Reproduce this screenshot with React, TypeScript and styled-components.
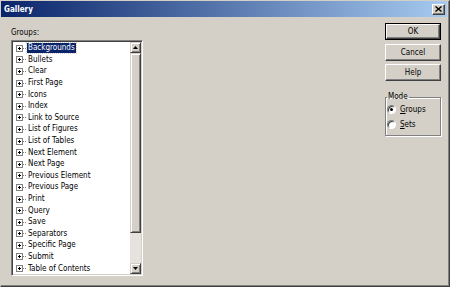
import React from "react";
import styled, { createGlobalStyle } from "styled-components";

const FONT = `"DejaVu Sans Condensed", "Liberation Sans", sans-serif`;

const GlobalStyle = createGlobalStyle`
  html, body {
    margin: 0;
    padding: 0;
    background: #d4d0c8;
  }
  body {
    font-family: ${FONT};
    font-size: 8px;
    color: #000;
  }
`;

const SWindow = styled.div`
  width: 450px;
  height: 287px;
  box-sizing: border-box;
  background: #d4d0c8;
  border-top: 1px solid #d4d0c8;
  border-left: 1px solid #d4d0c8;
  border-right: 1px solid #404040;
  border-bottom: 1px solid #404040;
  box-shadow: inset -1px -1px 0 #808080;
  display: flex;
  flex-direction: column;
  overflow: hidden;
`;

const STitleBar = styled.div`
  height: 16px;
  margin-right: 2px;
  background: linear-gradient(to right, #0a246a, #a6caf0);
  display: flex;
  align-items: center;
  justify-content: space-between;
  padding: 0 2px 0 3px;
`;

const STitle = styled.span`
  color: #fff;
  font-weight: bold;
  font-size: 8px;
`;

const SCloseButton = styled.div`
  width: 13px;
  height: 11px;
  box-sizing: border-box;
  background: #d4d0c8;
  border-top: 1px solid #fff;
  border-left: 1px solid #fff;
  border-right: 1px solid #404040;
  border-bottom: 1px solid #404040;
  box-shadow: inset -1px -1px 0 #808080;
  display: flex;
  align-items: center;
  justify-content: center;
`;

const SBody = styled.div`
  flex: 1;
  display: flex;
  padding: 0 0 0 10px;
`;

const SLeft = styled.div`
  display: flex;
  flex-direction: column;
`;

const SLabel = styled.div`
  margin-top: 9px;
  height: 14px;
  line-height: 14px;
`;

const SListBox = styled.div`
  width: 132px;
  height: 236px;
  box-sizing: border-box;
  background: #fff;
  border-top: 1px solid #808080;
  border-left: 1px solid #808080;
  border-right: 1px solid #fff;
  border-bottom: 1px solid #fff;
  box-shadow: inset 1px 1px 0 #404040, inset -1px -1px 0 #d4d0c8;
  padding: 1px;
  display: flex;
`;

const SItems = styled.div`
  flex: 1;
  padding-top: 0.5px;
  overflow: hidden;
`;

const SRow = styled.div`
  height: 11.6px;
  display: flex;
  align-items: center;
  padding-left: 3px;
  white-space: nowrap;
`;

const SExpander = styled.span`
  width: 7px;
  height: 7px;
  box-sizing: border-box;
  border: 1px solid #808080;
  position: relative;
  flex: none;
  &::before {
    content: "";
    position: absolute;
    left: 1px;
    top: 2px;
    width: 3px;
    height: 1px;
    background: #000;
  }
  &::after {
    content: "";
    position: absolute;
    left: 2px;
    top: 1px;
    width: 1px;
    height: 3px;
    background: #000;
  }
`;

const SDots = styled.span`
  width: 3px;
  height: 0;
  border-top: 1px dotted #808080;
  margin-right: 1px;
  flex: none;
`;

const SItemText = styled.span<{ $selected?: boolean }>`
  padding: 0 1px;
  line-height: 10px;
  height: 10px;
  background: ${(p) => (p.$selected ? "#0a246a" : "transparent")};
  color: ${(p) => (p.$selected ? "#fff" : "#000")};
  outline: ${(p) => (p.$selected ? "1px dotted #d4d0c8" : "none")};
`;

const SScrollBar = styled.div`
  width: 11px;
  display: flex;
  flex-direction: column;
`;

const SRaised = styled.div<{ $h?: number }>`
  height: ${(p) => (p.$h ? `${p.$h}px` : "auto")};
  box-sizing: border-box;
  background: #d4d0c8;
  border-top: 1px solid #d4d0c8;
  border-left: 1px solid #d4d0c8;
  border-right: 1px solid #404040;
  border-bottom: 1px solid #404040;
  box-shadow: inset 1px 1px 0 #fff, inset -1px -1px 0 #808080;
  display: flex;
  align-items: center;
  justify-content: center;
  flex: none;
`;

const STrack = styled.div`
  flex: 1;
  background: #e6e3de;
`;

const SRight = styled.div`
  margin-left: 242px;
  margin-top: 6px;
  width: 56px;
  display: flex;
  flex-direction: column;
  gap: 3.5px;
`;

const SButton = styled.div<{ $default?: boolean }>`
  height: 17px;
  box-sizing: border-box;
  background: #d4d0c8;
  border: 1px solid ${(p) => (p.$default ? "#000" : "transparent")};
  display: flex;
  align-items: stretch;
  & > span {
    flex: 1;
    display: flex;
    align-items: center;
    justify-content: center;
    border-top: 1px solid #fff;
    border-left: 1px solid #fff;
    border-right: 1px solid #404040;
    border-bottom: 1px solid #404040;
    box-shadow: inset -1px -1px 0 #808080;
    ${(p) => (p.$default ? "" : "margin: -1px;")}
  }
`;

const SGroupBox = styled.fieldset`
  margin: 7.5px 0 0;
  padding: 0 0 3px 1px;
  border: 1px solid #808080;
  box-shadow: 1px 1px 0 #fff, inset 1px 1px 0 #fff;
  min-width: 0;
  & > legend {
    padding: 0 1px;
    margin-left: 0;
    line-height: 10px;
  }
`;

const SRadioRow = styled.label`
  display: flex;
  align-items: center;
  height: 15px;
  gap: 4px;
`;

const SRadio = styled.span<{ $checked?: boolean }>`
  width: 9px;
  height: 9px;
  box-sizing: border-box;
  border-radius: 50%;
  background: #fff;
  border: 1px solid;
  border-color: #808080 #fff #fff #808080;
  box-shadow: inset 1px 1px 0 #404040;
  position: relative;
  flex: none;
  &::after {
    content: "";
    display: ${(p) => (p.$checked ? "block" : "none")};
    position: absolute;
    left: 2px;
    top: 2px;
    width: 3px;
    height: 3px;
    border-radius: 50%;
    background: #000;
  }
`;

const SAccel = styled.span`
  text-decoration: underline;
`;

const items = [
  "Backgrounds",
  "Bullets",
  "Clear",
  "First Page",
  "Icons",
  "Index",
  "Link to Source",
  "List of Figures",
  "List of Tables",
  "Next Element",
  "Next Page",
  "Previous Element",
  "Previous Page",
  "Print",
  "Query",
  "Save",
  "Separators",
  "Specific Page",
  "Submit",
  "Table of Contents",
];

function Arrow({ down }: { down?: boolean }) {
  return (
    <svg width="5" height="3" viewBox="0 0 5 3">
      <path d={down ? "M0 0h5L2.5 3z" : "M2.5 0L5 3H0z"} fill="#000" />
    </svg>
  );
}

export default function App() {
  return (
    <>
      <GlobalStyle />
      <SWindow>
        <STitleBar>
          <STitle>Gallery</STitle>
          <SCloseButton>
            <svg width="7" height="6" viewBox="0 0 7 6">
              <path d="M0.5 0.5L6.5 5.5M6.5 0.5L0.5 5.5" stroke="#000" strokeWidth="1.4" />
            </svg>
          </SCloseButton>
        </STitleBar>
        <SBody>
          <SLeft>
            <SLabel>Groups:</SLabel>
            <SListBox>
              <SItems>
                {items.map((name, i) => (
                  <SRow key={name}>
                    <SExpander />
                    <SDots />
                    <SItemText $selected={i === 0}>{name}</SItemText>
                  </SRow>
                ))}
              </SItems>
              <SScrollBar>
                <SRaised $h={11}>
                  <Arrow />
                </SRaised>
                <SRaised $h={180} />
                <STrack />
                <SRaised $h={11}>
                  <Arrow down />
                </SRaised>
              </SScrollBar>
            </SListBox>
          </SLeft>
          <SRight>
            <SButton $default>
              <span>OK</span>
            </SButton>
            <SButton>
              <span>Cancel</span>
            </SButton>
            <SButton>
              <span>Help</span>
            </SButton>
            <SGroupBox>
              <legend>Mode</legend>
              <SRadioRow>
                <SRadio $checked />
                <span>
                  <SAccel>G</SAccel>roups
                </span>
              </SRadioRow>
              <SRadioRow>
                <SRadio />
                <span>
                  <SAccel>S</SAccel>ets
                </span>
              </SRadioRow>
            </SGroupBox>
          </SRight>
        </SBody>
      </SWindow>
    </>
  );
}
